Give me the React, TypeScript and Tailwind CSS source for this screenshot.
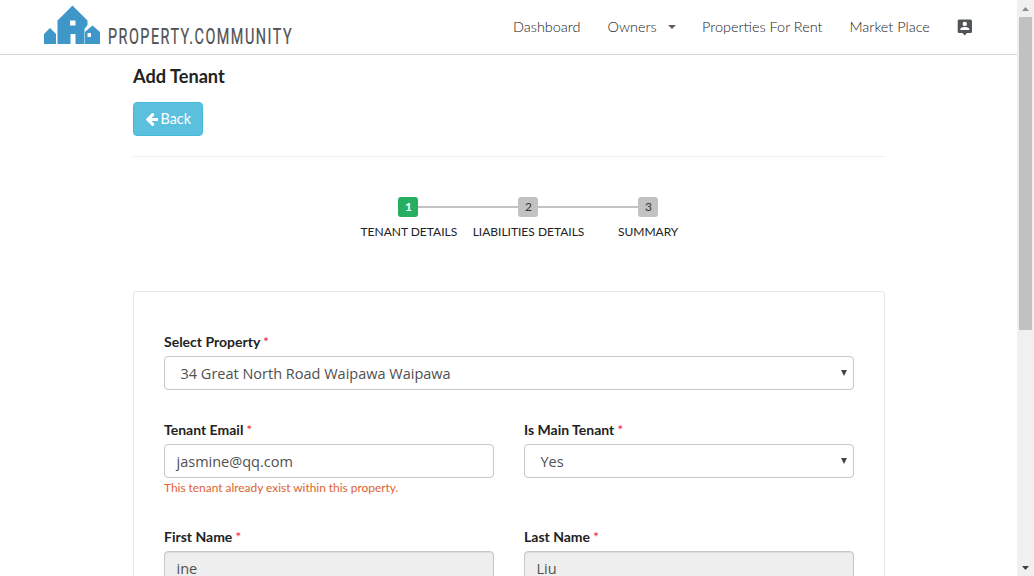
import type { ReactNode } from "react";

function Logo() {
  return (
    <svg width="252" height="50" viewBox="0 0 252 50" className="ml-[43px] mt-[3px] block shrink-0">
      <g fill="#3f97c9">
        <path
          fillRule="evenodd"
          d="M14.5 17.5 L29.5 2.5 L44.5 17.5 V22 L41.5 26 V41 H32.5 V31 H27.5 V41 H14.5 Z M27 17.5 V22.5 H32.5 V17.5 Z"
        />
        <path d="M1 31 L7 25 L13 31 V41 H1 Z" />
        <path fillRule="evenodd" d="M43 28 L49.5 22.5 L57 29 V41 H42 V29 Z M44.5 30 V34 H48 V30 Z" />
      </g>
      <g transform="translate(65 40.5) scale(0.67 1)">
        <text
          x="0"
          y="0"
          fill="#505154"
          stroke="#505154"
          strokeWidth="0.25"
          fontFamily="Roboto, sans-serif"
          fontSize="21.5"
          textLength="274"
          lengthAdjust="spacing"
        >
          PROPERTY.COMMUNITY
        </text>
      </g>
    </svg>
  );
}

function ContactIcon() {
  return (
    <svg width="16" height="17" viewBox="0 0 16 17" className="block">
      <path
        fill="#505557"
        fillRule="evenodd"
        d="M2 0.5 H13.5 Q15 0.5 15 2 V12.5 Q15 14 13.5 14 H10 L7.7 16.5 L5.5 14 H2 Q0.7 14 0.7 12.5 V2 Q0.7 0.5 2 0.5 Z M7.8 2.7 A2.2 2.2 0 1 0 7.8 7.1 A2.2 2.2 0 1 0 7.8 2.7 Z M3.3 11 H12.3 V10.2 C12.3 8.7 9.3 8 7.8 8 C6.3 8 3.3 8.7 3.3 10.2 Z"
      />
    </svg>
  );
}

function ArrowLeftIcon() {
  return (
    <svg width="12.5" height="13" viewBox="64 -75 1472 1558" fill="currentColor">
      <path d="M1536 640v128q0 53-32.5 90.5T1419 896H715l293 294q38 36 38 90t-38 90l-75 76q-37 37-90 37-52 0-91-37L101 794q-37-37-37-90 0-52 37-91L752-37q38-38 91-38 52 0 90 38l75 74q38 38 38 91t-38 91L715 512h704q52 0 84.5 37.5T1536 640z" />
    </svg>
  );
}

function Header() {
  return (
    <header className="flex h-[55px] border-b border-[#d6d6d6]">
      <Logo />
      <nav className="ml-[218px] flex h-[54px] items-center text-[14.45px] font-light whitespace-nowrap text-[#202020]">
        <span className="w-[94.5px]">Dashboard</span>
        <span className="w-[60px]">Owners</span>
        <svg width="8" height="4" viewBox="0 0 8 4" className="mr-[26.5px]">
          <path d="M0 0 H8 L4 4 Z" fill="#5f5f5f" />
        </svg>
        <span className="w-[147.5px]">Properties For Rent</span>
        <span className="w-[107.5px]">Market Place</span>
        <ContactIcon />
      </nav>
    </header>
  );
}

const stepBox = "flex size-5 items-center justify-center rounded-[3px] pl-px text-[12px]";

function Stepper() {
  return (
    <div className="mt-10 ml-[215px] w-[360px]">
      <div className="flex items-center pl-[50px]">
        <div className={`${stepBox} bg-[#27ae60] font-bold text-white`}>1</div>
        <div className="h-[2px] w-[100px] bg-[#c2c2c2]" />
        <div className={`${stepBox} bg-[#c2c2c2] text-[#333]`}>2</div>
        <div className="h-[2px] w-[100px] bg-[#c2c2c2]" />
        <div className={`${stepBox} bg-[#c2c2c2] text-[#333]`}>3</div>
      </div>
      <div className="mt-[6px] grid grid-cols-3 pl-px text-center text-[12px] leading-[18px] whitespace-nowrap text-[#222]">
        <span>TENANT DETAILS</span>
        <span>LIABILITIES DETAILS</span>
        <span>SUMMARY</span>
      </div>
    </div>
  );
}

function Field({ label, value, select, disabled, note }: {
  label: string;
  value: string;
  select?: boolean;
  disabled?: boolean;
  note?: ReactNode;
}) {
  return (
    <div className="flex min-w-0 flex-1 flex-col">
      <label className="h-5 text-[14px] leading-5 font-bold whitespace-nowrap text-[#222]">
        {label} <span className="-ml-[0.5px] font-normal text-[#ee1c35]">*</span>
      </label>
      <div
        className={`mt-1 flex h-[34px] items-center justify-between rounded-[4px] border border-[#c4c8ca] font-['Open_Sans',sans-serif] text-[14.5px] text-[#505050] ${
          select ? "pl-[15.5px]" : "pl-[11.5px]"
        } ${disabled ? "bg-[#eee] shadow-[inset_0_1px_1px_rgba(0,0,0,0.075)]" : "bg-white"}`}
      >
        <span className="pt-[2px] leading-[14px] whitespace-nowrap">{value}</span>
        {select && (
          <svg width="6" height="6" viewBox="0 0 6 6" className="mr-[6px] mb-px">
            <path d="M0 0 H6 L3 6 Z" fill="#444" />
          </svg>
        )}
      </div>
      {note}
    </div>
  );
}

function Scrollbar() {
  return (
    <div className="flex h-full w-[17px] shrink-0 flex-col items-center bg-[#f0f0f0]">
      <div className="flex h-[17px] items-center">
        <svg width="7" height="4" viewBox="0 0 7 4">
          <path d="M0 4 L3.5 0 L7 4 Z" fill="#8b8b8b" />
        </svg>
      </div>
      <div className="h-[313px] w-[13px] bg-[#c1c1c1]" />
      <div className="mt-auto flex h-[17px] items-center">
        <svg width="7" height="4" viewBox="0 0 7 4">
          <path d="M0 0 H7 L3.5 4 Z" fill="#404040" />
        </svg>
      </div>
    </div>
  );
}

export default function App() {
  return (
    <div className="flex h-[576px] w-[1034px] overflow-hidden bg-white font-['Lato',sans-serif]">
      <div className="h-full min-w-0 flex-1 overflow-hidden">
        <Header />
        <main className="ml-[133px] w-[752px]">
          <h1 className="pt-[9px] text-[18.2px] leading-6 font-bold text-[#222]">Add Tenant</h1>
          <button className="mt-[14px] flex h-[34px] w-[70px] items-center justify-center gap-[2px] rounded-[4px] border border-[#46b8da] bg-[#5bc0de] pl-px text-[14.4px] text-white">
            <ArrowLeftIcon />
            <span className="pb-px">Back</span>
          </button>
          <hr className="mt-5 border-[#eee]" />
          <Stepper />
          <section className="mt-[50px] h-[400px] rounded-[3px] border border-[#e7e7e7] px-[30px] pt-10">
            <div className="flex h-[88px]">
              <Field label="Select Property" value="34 Great North Road Waipawa Waipawa" select />
            </div>
            <div className="flex h-[107px] gap-[30px]">
              <Field
                label="Tenant Email"
                value="jasmine@qq.com"
                note={
                  <p className="mt-[2px] text-[11.9px] leading-4 whitespace-nowrap text-[#e0622f]">
                    This tenant already exist within this property.
                  </p>
                }
              />
              <Field label="Is Main Tenant" value="Yes" select />
            </div>
            <div className="flex gap-[30px]">
              <Field label="First Name" value="ine" disabled />
              <Field label="Last Name" value="Liu" disabled />
            </div>
          </section>
        </main>
      </div>
      <Scrollbar />
    </div>
  );
}
